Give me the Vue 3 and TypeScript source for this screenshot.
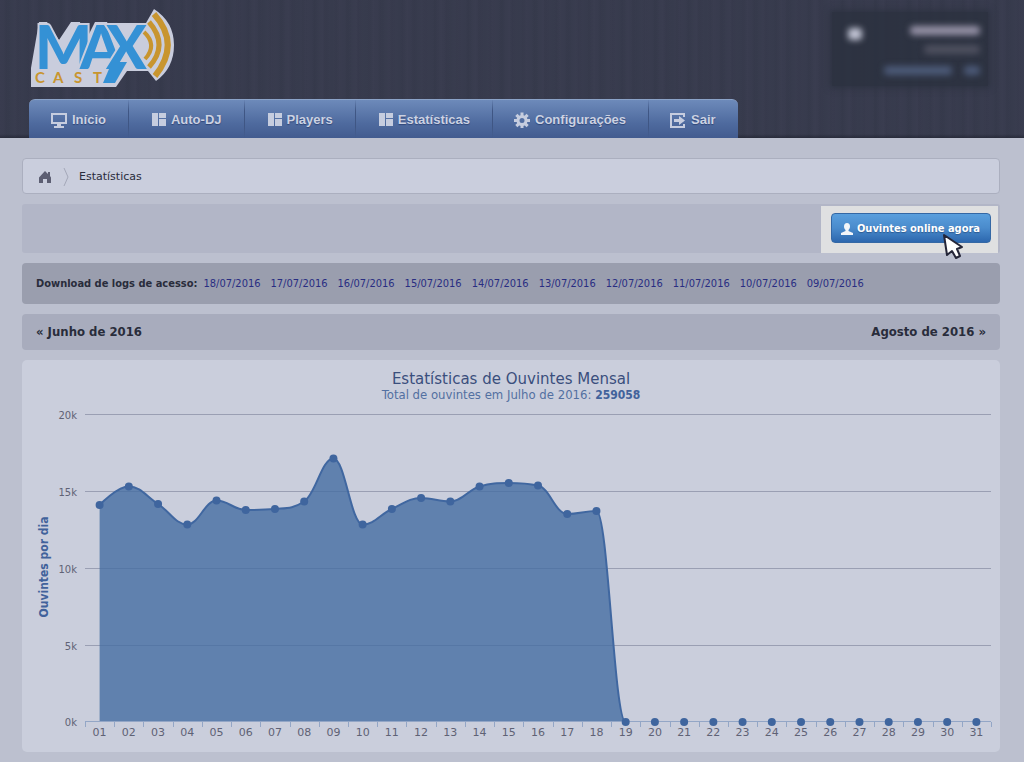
<script setup lang="ts">
import { computed, onBeforeUnmount, onMounted, ref } from 'vue'

interface NavItem {
  label: string
  icon: 'screen' | 'panels' | 'gear' | 'exit'
}

const navItems: NavItem[] = [
  { label: 'Início', icon: 'screen' },
  { label: 'Auto-DJ', icon: 'panels' },
  { label: 'Players', icon: 'panels' },
  { label: 'Estatísticas', icon: 'panels' },
  { label: 'Configurações', icon: 'gear' },
  { label: 'Sair', icon: 'exit' },
]

const gearTeeth = [0, 45, 90, 135, 180, 225, 270, 315]

const logDates = [18, 17, 16, 15, 14, 13, 12, 11, 10, 9].map(
  (d) => `${String(d).padStart(2, '0')}/07/2016`,
)

const listeners: number[] = [
  14137, 15342, 14202, 12866, 14430, 13811, 13876, 14365, 17166, 12866, 13876, 14593, 14365,
  15342, 15570, 15407, 13550, 13746, 0, 0, 0, 0, 0, 0, 0, 0, 0, 0, 0, 0, 0,
]

const chartHeight = 392
const plot = { left: 63, right: 9, top: 55, bottom: 362 }
const maxValue = 20000

const chartBox = ref<HTMLElement | null>(null)
const chartWidth = ref(978)
let observer: ResizeObserver | undefined

onMounted(() => {
  if (!chartBox.value) return
  chartWidth.value = chartBox.value.clientWidth
  observer = new ResizeObserver((entries) => {
    chartWidth.value = Math.round(entries[0].contentRect.width)
  })
  observer.observe(chartBox.value)
})
onBeforeUnmount(() => observer?.disconnect())

const plotRight = computed(() => chartWidth.value - plot.right)
const step = computed(() => (plotRight.value - plot.left) / listeners.length)

function yFor(value: number): number {
  return plot.bottom - (value / maxValue) * (plot.bottom - plot.top)
}

const gridLines = [0, 5, 10, 15, 20].map((k) => ({
  label: `${k}k`,
  y: Math.ceil(yFor(k * 1000)),
}))

const points = computed(() =>
  listeners.map((v, i) => ({
    x: plot.left + step.value * (i + 0.5),
    y: yFor(v),
    label: String(i + 1).padStart(2, '0'),
  })),
)

const ticks = computed(() =>
  Array.from({ length: listeners.length + 1 }, (_, i) => Math.round(plot.left + step.value * i)),
)

const linePath = computed(() => {
  const pts = points.value
  const smooth = 1.5
  const denom = smooth + 1
  let out = { x: pts[0].x, y: pts[0].y }
  let d = `M${pts[0].x} ${pts[0].y}`
  for (let i = 1; i < pts.length; i++) {
    const p = pts[i]
    const last = pts[i - 1]
    const next = pts[i + 1]
    let left = { x: p.x, y: p.y }
    let right = { x: p.x, y: p.y }
    if (next) {
      left = { x: (smooth * p.x + last.x) / denom, y: (smooth * p.y + last.y) / denom }
      right = { x: (smooth * p.x + next.x) / denom, y: (smooth * p.y + next.y) / denom }
      const fix = ((right.y - left.y) * (right.x - p.x)) / (right.x - left.x) + p.y - right.y
      left.y += fix
      right.y += fix
      const hiL = Math.max(last.y, p.y)
      const loL = Math.min(last.y, p.y)
      if (left.y > hiL || left.y < loL) {
        left.y = left.y > hiL ? hiL : loL
        right.y = 2 * p.y - left.y
      }
      const hiR = Math.max(next.y, p.y)
      const loR = Math.min(next.y, p.y)
      if (right.y > hiR || right.y < loR) {
        right.y = right.y > hiR ? hiR : loR
        left.y = 2 * p.y - right.y
      }
    }
    d += `C${out.x} ${out.y} ${left.x} ${left.y} ${p.x} ${p.y}`
    out = right
  }
  return d
})

const areaPath = computed(() => {
  const pts = points.value
  return `${linePath.value}L${pts[pts.length - 1].x} ${plot.bottom}L${pts[0].x} ${plot.bottom}Z`
})
</script>

<template>
  <div class="page">
    <header class="header">
      <div class="brand-row">
        <a href="#" class="logo" aria-label="MAX CAST">
          <svg width="146" height="82" viewBox="30 8 146 82">
            <path
              class="plate"
              d="M39 22H47L59 40L71 22H80L84 44L95 22H107L117 45L108 23H146L154 9Q174 22 174 45Q174 68 156 81L148 71H132L127 71L116 87H31V68Z"
            />
            <text class="logo-main" x="35 80 106" y="69">MAX</text>
            <path class="logo-tail" d="M112 62H127L115 83H103Z" />
            <text class="logo-sub" x="35 53 74 93" y="83">CAST</text>
            <path class="wave wave-s" d="M144 32Q158 45 145 59" />
            <path class="wave wave-m" d="M149 22Q169 45 149 67" />
            <path class="wave wave-l" d="M154 14Q181 44 155 76" />
          </svg>
        </a>
        <div class="account" aria-hidden="true">
          <span class="blob avatar"></span>
          <span class="blob name"></span>
          <span class="blob plan"></span>
          <span class="blob options"></span>
          <span class="blob leave"></span>
        </div>
      </div>

      <nav class="nav">
        <a v-for="item in navItems" :key="item.label" href="#" class="nav-item">
          <svg class="nav-icon" width="16" height="16" viewBox="0 0 16 16" aria-hidden="true">
            <template v-if="item.icon === 'screen'">
              <path fill-rule="evenodd" d="M0 1H16V12H0ZM2 3V10H14V3ZM6 12H10V14H13V16H3V14H6Z" />
            </template>
            <template v-else-if="item.icon === 'panels'">
              <path d="M2 1H8V14H2ZM9 1H16V6H9ZM9 7H16V14H9Z" />
            </template>
            <template v-else-if="item.icon === 'gear'">
              <rect
                v-for="a in gearTeeth"
                :key="a"
                x="6.5"
                y="0.5"
                width="3"
                height="4"
                :transform="`rotate(${a} 8 8.5)`"
              />
              <circle class="gear-ring" cx="8" cy="8.5" r="4" />
            </template>
            <template v-else>
              <path d="M0 1H15V5H13V3H2V14H13V12H15V16H0ZM4 7H9V4L15 8.5L9 13V10H4Z" />
            </template>
          </svg>
          <span>{{ item.label }}</span>
        </a>
      </nav>
    </header>

    <main class="content">
      <div class="breadcrumb">
        <a href="#" class="home" aria-label="Início">
          <svg width="12" height="12" viewBox="0 0 12 12">
            <path d="M6 0L9 3V1H11V5L12 6.5V12H8V8H4V12H0V6.5Z" />
          </svg>
        </a>
        <svg class="chevron" width="6" height="20" viewBox="0 0 6 20" aria-hidden="true">
          <path d="M1 1L5 10L1 19" />
        </svg>
        <span>Estatísticas</span>
      </div>

      <div class="toolbar">
        <div class="spotlight">
          <button type="button" class="online">
            <svg width="12" height="12" viewBox="0 0 12 12" aria-hidden="true">
              <path
                d="M6 0C8 0 9 1.500 9 3.500C9 5 8.300 6.200 7.500 7V8L12 10V12H0V10L4.500 8V7C3.700 6.200 3 5 3 3.500C3 1.500 4 0 6 0Z"
              />
            </svg>
            Ouvintes online agora
          </button>
          <svg class="cursor" width="22" height="28" viewBox="0 0 22 28" aria-hidden="true">
            <path d="M2 2L5 22L10 18L14 25L18 23L15 16L20 14Z" />
          </svg>
        </div>
      </div>

      <div class="logs">
        <strong>Download de logs de acesso:</strong>
        <a v-for="date in logDates" :key="date" href="#">{{ date }}</a>
      </div>

      <div class="months">
        <a href="#">« Junho de 2016</a>
        <a href="#">Agosto de 2016 »</a>
      </div>

      <section ref="chartBox" class="chart">
        <svg
          :width="chartWidth"
          :height="chartHeight"
          role="img"
          aria-label="Estatísticas de Ouvintes Mensal"
        >
          <defs>
            <clipPath id="plot-clip">
              <rect
                :x="plot.left"
                :y="plot.top"
                :width="plotRight - plot.left"
                :height="plot.bottom - plot.top - 1"
              />
            </clipPath>
          </defs>
          <text class="title" :x="chartWidth / 2" y="24">Estatísticas de Ouvintes Mensal</text>
          <text class="subtitle" :x="chartWidth / 2" y="39">
            Total de ouvintes em Julho de 2016: <tspan class="total">259058</tspan>
          </text>
          <text class="axis-title" transform="translate(26 207) rotate(-90)">
            Ouvintes por dia
          </text>

          <g v-for="line in gridLines" :key="line.label">
            <rect
              class="grid"
              :class="{ base: line.label === '0k' }"
              :x="plot.left"
              :y="line.y - 1"
              :width="plotRight - plot.left"
              height="1"
            />
            <text class="label y-label" x="55" :y="line.y + 4">{{ line.label }}</text>
          </g>
          <rect
            v-for="x in ticks"
            :key="x"
            class="tick"
            :x="x"
            :y="plot.bottom"
            width="1"
            height="5"
          />
          <g clip-path="url(#plot-clip)">
            <path class="area" :d="areaPath" />
            <path class="line" :d="linePath" />
          </g>
          <g v-for="p in points" :key="p.label">
            <circle class="dot" :cx="p.x" :cy="p.y" r="4" />
            <text class="label" :x="p.x" y="376">{{ p.label }}</text>
          </g>
        </svg>
      </section>
    </main>
  </div>
</template>

<style>
body {
  margin: 0;
  background: #bcc0cf;
}
</style>

<style scoped>
.page {
  min-height: 100vh;
  box-sizing: border-box;
  padding-bottom: 10px;
  background: #bcc0cf;
  color: #292c3b;
  font: 11px/16px 'DejaVu Sans', Verdana, sans-serif;
}
a {
  color: inherit;
  text-decoration: none;
}
.header {
  box-sizing: border-box;
  padding: 8px 29px 0;
  background:
    linear-gradient(transparent 134px, rgba(25, 28, 40, 0.5) 138px),
    repeating-linear-gradient(90deg, transparent 0 4px, rgba(30, 33, 46, 0.07) 6px, transparent 11px),
    repeating-linear-gradient(90deg, #393c4f 0, #373b4d 9px, #3a3d50 17px);
}
.brand-row {
  display: flex;
  justify-content: space-between;
  align-items: flex-start;
  height: 91px;
}
.logo {
  display: block;
  margin-left: 1px;
}
.logo svg {
  display: block;
}
.plate {
  fill: #c9cddd;
}
.logo-main {
  fill: #3491d5;
  stroke: #c9cddd;
  stroke-width: 4;
  paint-order: stroke;
  font: 900 60px 'Lato', 'Liberation Sans', sans-serif;
}
.logo-tail {
  fill: #3491d5;
}
.logo-sub {
  fill: #c8952f;
  font: 700 15px 'Lato', 'Liberation Sans', sans-serif;
}
.wave {
  fill: none;
  stroke: #c8952f;
}
.wave-s {
  stroke-width: 4;
}
.wave-m {
  stroke-width: 5;
}
.wave-l {
  stroke-width: 6;
}
.account {
  display: grid;
  grid-template-columns: 14px 1fr 34px 16px;
  grid-template-rows: 16px 14px 20px;
  gap: 4px 12px;
  align-items: center;
  box-sizing: border-box;
  width: 156px;
  margin: 4px 7px 0 0;
  padding: 10px 8px 6px 16px;
  background: rgba(42, 49, 62, 0.8);
  box-shadow: 0 0 6px 2px rgba(42, 49, 62, 0.8);
}
.blob {
  height: 9px;
  border-radius: 4px;
  filter: blur(3px);
}
.avatar {
  height: 12px;
  margin-top: 8px;
  background: #c0c3d3;
}
.name {
  grid-column: 2 / 5;
  width: 70px;
  justify-self: end;
  background: #9692a7;
}
.plan {
  grid-column: 2 / 5;
  width: 56px;
  justify-self: end;
  background: #4e505f;
}
.options {
  grid-column: 2 / 4;
  width: 68px;
  justify-self: end;
  background: #4c5a78;
}
.leave {
  background: #4c5a78;
}
.nav {
  display: flex;
  width: max-content;
  height: 39px;
  box-sizing: border-box;
  border-top: 1px solid #8ba3c8;
  border-radius: 6px 6px 0 0;
  background: linear-gradient(#6d8aba, #4f6b9f 60%, #425b8f);
}
.nav-item {
  display: flex;
  align-items: center;
  gap: 5px;
  padding: 2px 22px 0 21px;
  border-left: 1px solid;
  border-image: linear-gradient(transparent, #3f5684 30%, #3f5684 70%, transparent) 1;
  color: #ccd2e2;
  font: 700 13px/16px 'Liberation Sans', Arial, sans-serif;
  text-shadow: 0 1px 1px #2f4678;
}
.nav-item:first-child {
  border-image: none;
  border-color: transparent;
}
.nav-icon {
  fill: #c6cddf;
}
.gear-ring {
  fill: none;
  stroke: #c6cddf;
  stroke-width: 3;
}
.content {
  display: flex;
  flex-direction: column;
  gap: 10px;
  padding: 20px 24px 0 22px;
}
.breadcrumb {
  display: flex;
  align-items: center;
  box-sizing: border-box;
  height: 36px;
  padding: 2px 16px 0;
  border: 1px solid #abafbf;
  border-radius: 4px;
  background: #cacedd;
}
.home {
  display: flex;
}
.home svg {
  fill: #5c5e72;
}
.chevron {
  margin: 0 10px 0 12px;
  fill: none;
  stroke: #a4a8b9;
}
.toolbar {
  display: flex;
  justify-content: flex-end;
  box-sizing: border-box;
  height: 49px;
  padding: 2px 2px 0 0;
  border-radius: 3px;
  background: #b2b6c7;
}
.spotlight {
  position: relative;
  padding: 7px 7px 10px 10px;
  background: #dfe0e1;
}
.online {
  display: flex;
  align-items: center;
  gap: 4px;
  height: 30px;
  box-sizing: border-box;
  padding: 2px 10px 0 9px;
  border: 1px solid #3468a5;
  border-radius: 4px;
  background: linear-gradient(#5a9fdd, #4a8bcc 50%, #2c67ae);
  color: #fff;
  font: 700 11px/16px 'DejaVu Sans Condensed', 'DejaVu Sans', sans-serif;
  text-shadow: 0 1px 1px #2d5a90;
}
.online svg {
  fill: #f2f5f9;
}
.cursor {
  position: absolute;
  right: 34px;
  bottom: -8px;
  fill: #fff;
  stroke: #252638;
  stroke-width: 2;
  stroke-linejoin: round;
}
.logs {
  display: flex;
  align-items: center;
  gap: 10px;
  box-sizing: border-box;
  height: 41px;
  padding: 0 14px;
  border-radius: 4px;
  background: #9a9eae;
  font: 11px/16px 'DejaVu Sans Condensed', 'DejaVu Sans', sans-serif;
}
.logs strong {
  margin-right: -4px;
}
.logs a {
  color: #292d82;
}
.months {
  display: flex;
  align-items: center;
  justify-content: space-between;
  box-sizing: border-box;
  height: 36px;
  padding: 0 14px;
  border-radius: 4px;
  background: #a8acbd;
  font: 700 13px/16px 'DejaVu Sans Condensed', 'DejaVu Sans', sans-serif;
}
.chart {
  border-radius: 5px;
  background: #cacedc;
}
.chart svg {
  display: block;
}
.title,
.subtitle,
.label,
.axis-title {
  text-anchor: middle;
  font-family: 'DejaVu Sans', sans-serif;
}
.title {
  fill: #3a4f7d;
  font-size: 15px;
}
.subtitle {
  fill: #5370a1;
  font-family: 'DejaVu Sans Condensed', 'DejaVu Sans', sans-serif;
  font-size: 13px;
}
.total {
  fill: #41629b;
  font-size: 12px;
  font-weight: 700;
}
.axis-title {
  fill: #41629b;
  font-family: 'DejaVu Sans Condensed', 'DejaVu Sans', sans-serif;
  font-size: 12px;
  font-weight: 700;
}
.label {
  fill: #5f6275;
  font-size: 11px;
}
.y-label {
  text-anchor: end;
  font-size: 10px;
}
.grid {
  fill: #9a9fb3;
}
.base,
.tick {
  fill: #93a6c6;
}
.area {
  fill: #436ba2;
  fill-opacity: 0.78;
}
.line {
  fill: none;
  stroke: #4067a0;
  stroke-width: 2;
}
.dot {
  fill: #3f659e;
}
</style>
